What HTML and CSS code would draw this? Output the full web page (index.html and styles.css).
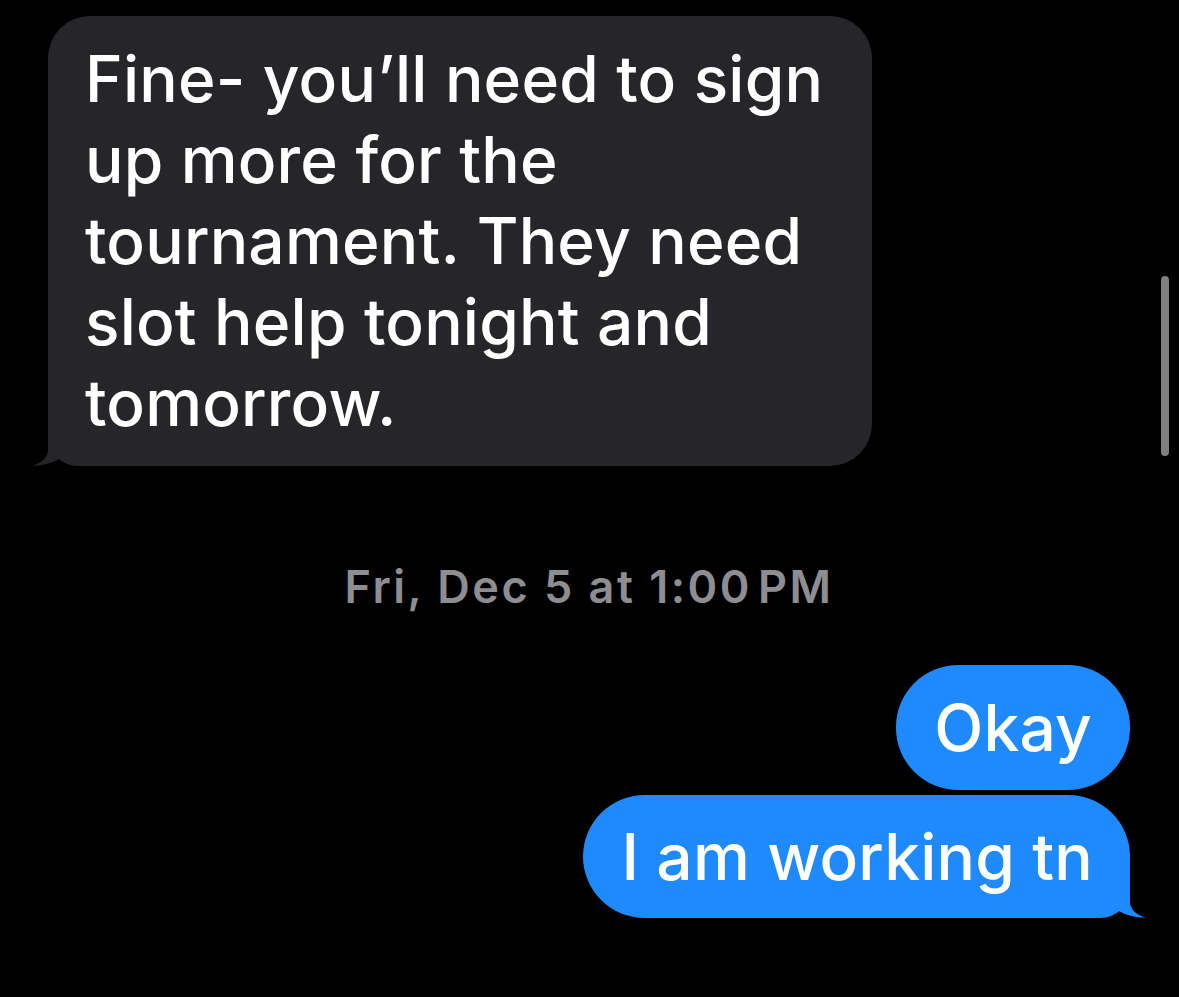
FILE: index.html
```html
<!DOCTYPE html>
<html lang="en">
<head>
    <meta charset="UTF-8">
    <meta name="viewport" content="width=device-width, initial-scale=1.0">
    <title>Messages</title>
    <link rel="stylesheet" href="styles.css">
</head>
<body>
    <div class="thread">
        <div class="bubble received">
            <svg class="tail tail-left" viewBox="0 0 60 46" width="60" height="46">
                <path d="M16,0 L16,30 C16,38 8,44 0,45.5 C10,46 22,43 30,37 C38,43 48,46 60,46 L60,0 Z" />
            </svg>
            <span class="text">Fine- you’ll need to sign up more for the tournament. They need slot help tonight and tomorrow.</span>
        </div>

        <p class="timestamp">Fri, Dec 5 at 1:00<span class="meridiem">PM</span></p>

        <div class="bubble sent">
            <span class="text">Okay</span>
        </div>
        <div class="bubble sent last">
            <svg class="tail tail-right" viewBox="0 0 60 46" width="60" height="46">
                <path d="M16,0 L16,30 C16,38 8,44 0,45.5 C10,46 22,43 30,37 C38,43 48,46 60,46 L60,0 Z" />
            </svg>
            <span class="text">I am working tn</span>
        </div>
    </div>

    <div class="scrollbar"></div>
</body>
</html>
```

FILE: styles.css
```css
body {
    margin: 0;
    padding: 0;
    background: #000;
    font-family: Inter, "Noto Sans", sans-serif;
    overflow: hidden;
}

.thread {
    display: flex;
    flex-direction: column;
    padding: 16px 49px 0 48px;
}

.bubble {
    position: relative;
    font-size: 64px;
    font-weight: 500;
    line-height: 81px;
    letter-spacing: 0.2px;
    color: #fff;
    border-radius: 42px;
}

.bubble .text {
    position: relative;
}

.received {
    align-self: flex-start;
    width: 749px;
    padding: 22px 38px 23px 37px;
    background: #26252a;
    border-bottom-left-radius: 30px;
}

.received .tail {
    fill: #26252a;
}

.sent {
    align-self: flex-end;
    padding: 22px 38px 22px 38px;
    background: #1f8afe;
    border-radius: 62px;
}

.sent.last {
    margin-top: 5px;
    padding: 21px 37px 21px 38px;
    border-bottom-right-radius: 30px;
}

.sent .tail {
    fill: #1f8afe;
}

.tail {
    position: absolute;
    bottom: 0;
}

.tail-left {
    left: -16px;
}

.tail-right {
    right: -16px;
    transform: scaleX(-1);
}

.timestamp {
    margin: 91px 0 48px;
    text-align: center;
    font-size: 45px;
    line-height: 60px;
    font-weight: 600;
    letter-spacing: 2.5px;
    color: #8d8d92;
}

.meridiem {
    margin-left: 6px;
}

.scrollbar {
    position: absolute;
    top: 276px;
    left: 1161px;
    width: 8px;
    height: 180px;
    border-radius: 4px;
    background: #7f7f7f;
}
```
